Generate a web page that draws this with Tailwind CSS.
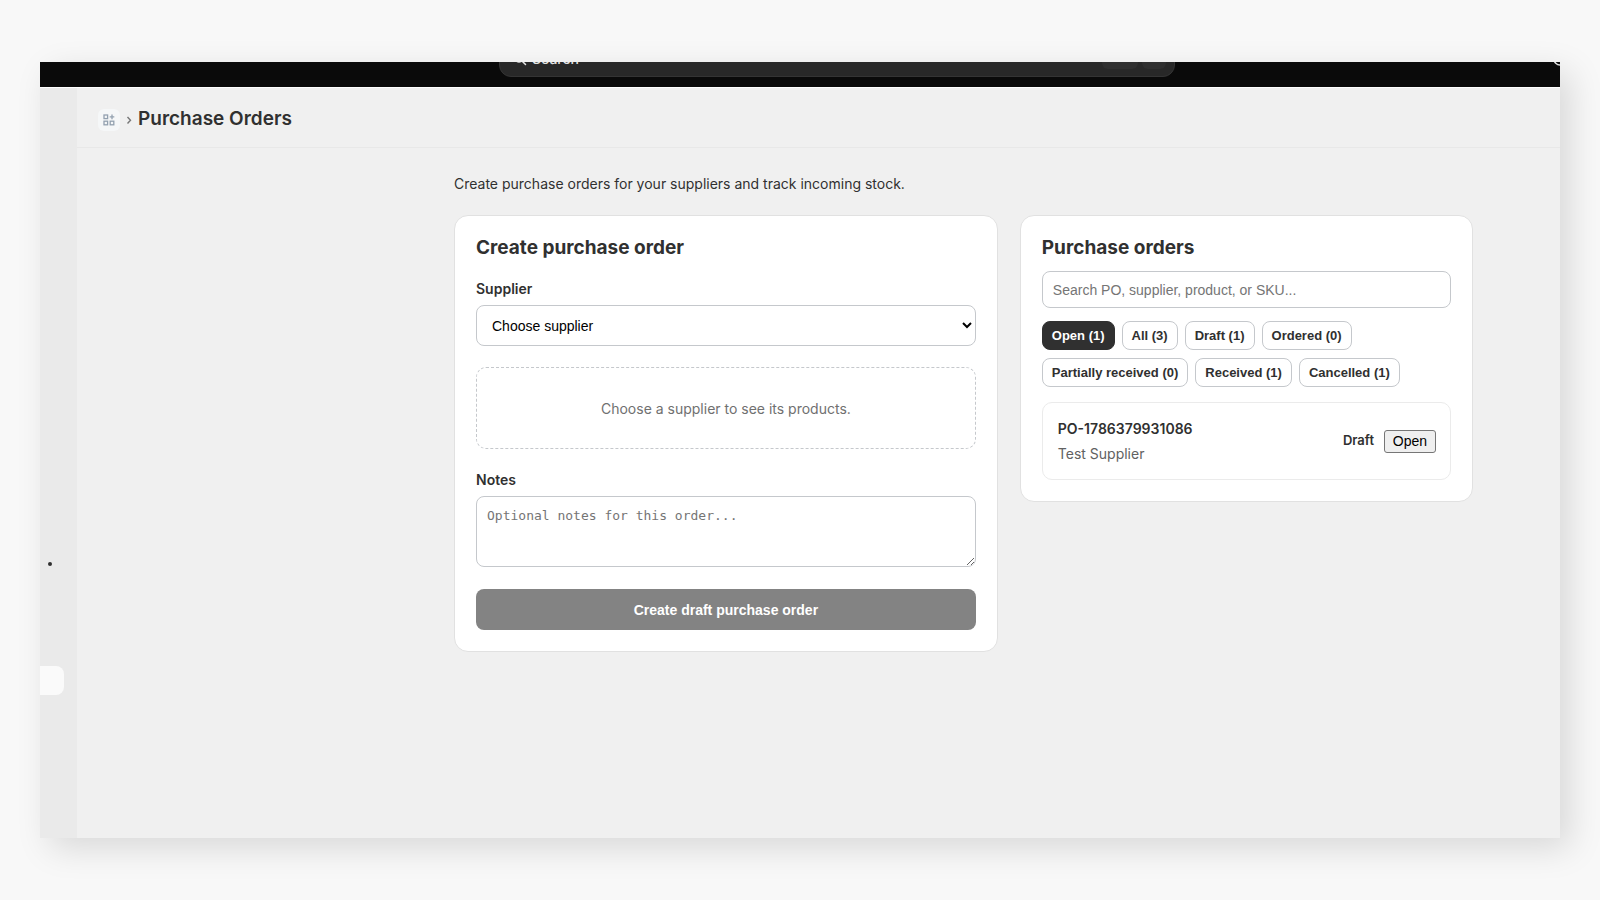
<!DOCTYPE html>
<html lang="en">
<head>
    <meta charset="UTF-8">
    <meta name="viewport" content="width=device-width,initial-scale=1">
    <title>Purchase Orders</title>
    <script src="https://cdn.jsdelivr.net/npm/@tailwindcss/browser@4"></script>
</head>
<body class="bg-[#f8f8f8] min-h-screen flex px-10 py-[62px] font-['Inter','Liberation_Sans',sans-serif] text-[#303030]">
    <div class="flex-1 flex flex-col overflow-hidden bg-[#f0f0f0] shadow-[10px_10px_32px_rgba(0,0,0,0.13)]">
        <!-- Top bar, scrolled partly out of the frame -->
        <header class="-mt-[31px] h-14 shrink-0 flex items-center bg-[#0a0a0a] pl-[459px]">
            <button type="button" class="w-[676px] h-9 flex items-center gap-1 pl-3 pr-2 rounded-xl border border-[#343434] bg-[#282828] text-[#e3e3e3] text-sm font-medium">
                <svg class="size-4" viewBox="0 0 16 16" fill="none" stroke="currentColor" stroke-width="1.5" stroke-linecap="round"><circle cx="7" cy="7" r="4"/><path d="M10 10l3.5 3.5"/></svg>
                <span>Search</span>
                <span class="ml-auto flex gap-1">
                    <span class="w-9 h-5 rounded-md bg-[#2f2f2f]"></span>
                    <span class="w-6 h-5 rounded-md bg-[#2f2f2f]"></span>
                </span>
            </button>
            <svg class="ml-auto -mr-2 size-4 shrink-0 text-[#e3e3e3]" viewBox="0 0 16 16" fill="none" stroke="currentColor" stroke-width="1.5"><circle cx="8" cy="8" r="6"/></svg>
        </header>

        <div class="flex-1 flex border-t border-white">
            <aside class="w-[37px] shrink-0 bg-[#eaeaea] pt-[474px]">
                <div class="ml-2 size-1 rounded-full bg-[#303030]"></div>
                <div class="mt-[100px] w-6 h-[29px] rounded-r-lg bg-[#fafafa]"></div>
            </aside>

            <main class="flex-1">
                <div class="h-[60px] flex items-center pl-[21px] pt-1 border-b border-[#e8e8e8]">
                    <a href="#" aria-label="Apps" class="size-[22px] flex items-center justify-center rounded-md bg-[#f5f7f8] text-[#93a1b0]">
                        <svg class="size-3" viewBox="0 0 12 12" fill="none" stroke="currentColor" stroke-width="1.3"><rect x="1" y="1" width="3.6" height="3.6"/><rect x="1" y="7.2" width="3.6" height="3.6"/><rect x="7.2" y="7.2" width="3.6" height="3.6"/><path d="M9 .6v4.6M6.7 2.9h4.6"/></svg>
                    </a>
                    <svg class="ml-[5px] size-2" viewBox="0 0 8 8" fill="none" stroke="#777777" stroke-width="1.4"><path d="M2.5 1L5.5 4.2L2.5 7.4"/></svg>
                    <h1 class="ml-[5px] text-[19px] font-semibold">Purchase Orders</h1>
                </div>

                <div class="pl-[377px] pr-[87px] pt-[26px]">
                    <p class="text-sm leading-5">Create purchase orders for your suppliers and track incoming stock.</p>

                    <div class="mt-[21px] grid grid-cols-[1.2fr_1fr] gap-[22px] items-start">
                        <form class="p-[21px] bg-white border border-[#e1e1e1] rounded-[14px]">
                            <h2 class="text-[19px] leading-[22px] font-bold">Create purchase order</h2>

                            <label for="supplier" class="block mt-5 text-sm leading-5 font-semibold">Supplier</label>
                            <select id="supplier" class="mt-[6px] w-full h-[41px] pl-[11px] border border-[#c5c8cc] rounded-lg bg-white text-black text-sm font-['Liberation_Sans',sans-serif]">
                                <option>Choose supplier</option>
                                <option>Test Supplier</option>
                            </select>

                            <div class="mt-[21px] h-[82px] pt-0.5 flex items-center justify-center border border-dashed border-[#c5c8cc] rounded-[10px] text-sm text-[#707070]">Choose a supplier to see its products.</div>

                            <label for="notes" class="block mt-[21px] text-sm leading-5 font-semibold">Notes</label>
                            <textarea id="notes" placeholder="Optional notes for this order..." class="block mt-[6px] w-full h-[71px] px-[10px] py-[9px] border border-[#c5c8cc] rounded-lg text-[13px] font-['DejaVu_Sans_Mono',monospace] placeholder:text-[#757575]"></textarea>

                            <button type="button" class="mt-[22px] w-full h-[41px] rounded-lg bg-[#838383] text-white text-sm font-bold font-['Liberation_Sans',sans-serif]">Create draft purchase order</button>
                        </form>

                        <section class="p-[21px] bg-white border border-[#e1e1e1] rounded-[14px]">
                            <h2 class="text-[19px] leading-[22px] font-bold">Purchase orders</h2>
                            <input type="search" aria-label="Search purchase orders" placeholder="Search PO, supplier, product, or SKU..." class="mt-3 w-full h-[37px] px-[10px] border border-[#c5c8cc] rounded-lg text-sm font-['Liberation_Sans',sans-serif] placeholder:text-[#757575]">

                            <div class="mt-[13px] flex flex-wrap gap-x-[7px] gap-y-2 text-[13px] font-bold font-['Liberation_Sans',sans-serif]">
                                <button type="button" class="h-[29px] px-[9px] border border-[#303030] rounded-lg bg-[#303030] text-white">Open (1)</button>
                                <button type="button" class="h-[29px] px-[9px] border border-[#c5c8cc] rounded-lg bg-white">All (3)</button>
                                <button type="button" class="h-[29px] px-[9px] border border-[#c5c8cc] rounded-lg bg-white">Draft (1)</button>
                                <button type="button" class="h-[29px] px-[9px] border border-[#c5c8cc] rounded-lg bg-white">Ordered (0)</button>
                                <button type="button" class="h-[29px] px-[9px] border border-[#c5c8cc] rounded-lg bg-white">Partially received (0)</button>
                                <button type="button" class="h-[29px] px-[9px] border border-[#c5c8cc] rounded-lg bg-white">Received (1)</button>
                                <button type="button" class="h-[29px] px-[9px] border border-[#c5c8cc] rounded-lg bg-white">Cancelled (1)</button>
                            </div>

                            <article class="mt-[15px] h-[78px] pl-[15px] pr-[14px] flex items-center border border-[#ebebeb] rounded-[10px]">
                                <div class="flex-1 text-sm leading-5">
                                    <h3 class="font-semibold">PO-1786379931086</h3>
                                    <p class="mt-[5px] text-[#616161]">Test Supplier</p>
                                </div>
                                <span class="text-[13px] font-semibold">Draft</span>
                                <button type="button" class="ml-[10px] w-[52px] h-[23px] border border-[#767676] rounded-[3px] bg-[#efefef] text-black text-sm leading-5 font-['Liberation_Sans',sans-serif]">Open</button>
                            </article>
                        </section>
                    </div>
                </div>
            </main>
        </div>
    </div>
</body>
</html>
